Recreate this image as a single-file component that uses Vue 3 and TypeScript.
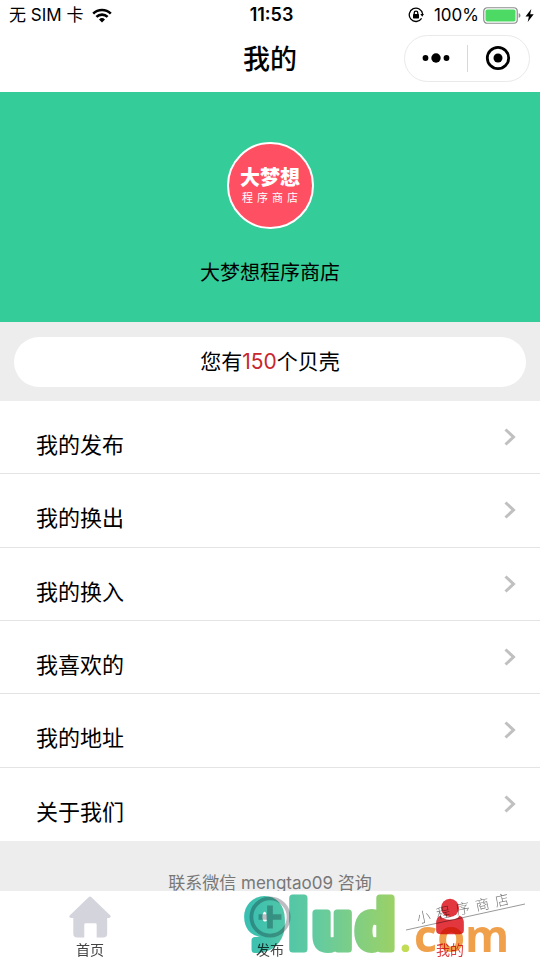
<script setup lang="ts">
interface MenuItem {
  id: string
  label: string
}

interface TabItem {
  id: 'home' | 'publish' | 'mine'
  label: string
}

const shells: number = 150

const menu: MenuItem[] = [
  { id: 'published', label: '我的发布' },
  { id: 'given', label: '我的换出' },
  { id: 'received', label: '我的换入' },
  { id: 'liked', label: '我喜欢的' },
  { id: 'address', label: '我的地址' },
  { id: 'about', label: '关于我们' },
]

const tabs: TabItem[] = [
  { id: 'home', label: '首页' },
  { id: 'publish', label: '发布' },
  { id: 'mine', label: '我的' },
]

const activeTab: TabItem['id'] = 'mine'
</script>

<template>
  <div class="screen">
    <header class="top">
      <div class="status">
        <div class="carrier">
          <span>无 SIM 卡</span>
          <svg class="wifi" viewBox="0 0 20 15" aria-hidden="true">
            <path d="M1.2 5.6a12.6 12.6 0 0 1 17.6 0" />
            <path d="M4.4 8.9a8 8 0 0 1 11.2 0" />
            <path class="solid" d="M10 14.4l-3-3a4.3 4.3 0 0 1 6 0z" />
          </svg>
        </div>
        <span class="time">11:53</span>
        <div class="power">
          <svg class="lock" viewBox="0 0 16 16" aria-hidden="true">
            <path d="M13.6 11.4A6.7 6.7 0 1 1 14.6 7" />
            <path class="solid" d="M12.3 6.9h3.7l-1.8 2.8z" />
            <rect class="solid" x="5" y="7" width="6" height="4.4" rx=".6" />
            <path d="M6.2 7.2V5.9a1.8 1.8 0 0 1 3.6 0v1.3" />
          </svg>
          <span class="percent">100%</span>
          <svg class="battery" viewBox="0 0 38 17" aria-hidden="true">
            <rect x=".75" y=".75" width="33.5" height="15.5" rx="3.5" fill="#fff" stroke="#8b8f8c" stroke-width="1.2" />
            <rect x="2.5" y="2.5" width="30" height="12" rx="1.8" fill="#4cd964" />
            <path d="M35.7 6v5q1.8-.6 1.8-2.5T35.7 6z" fill="#8b8f8c" />
          </svg>
          <svg class="bolt" viewBox="0 0 9 13" aria-hidden="true">
            <path d="M6.3 0L.5 7.4h3.4L2.7 13l6-7.7H5.2z" />
          </svg>
        </div>
      </div>
      <div class="nav">
        <h1>我的</h1>
        <div class="capsule">
          <button type="button" aria-label="更多">
            <svg viewBox="0 0 28 12" width="28" height="12">
              <circle cx="3.5" cy="6" r="2.9" />
              <circle cx="14" cy="6" r="4.7" />
              <circle cx="24.5" cy="6" r="2.9" />
            </svg>
          </button>
          <span class="rule"></span>
          <button type="button" aria-label="关闭">
            <svg viewBox="0 0 26 26" width="26" height="26">
              <circle cx="13" cy="13" r="10.7" fill="none" stroke="#000" stroke-width="2.8" />
              <circle cx="13" cy="13" r="4.5" />
            </svg>
          </button>
        </div>
      </div>
    </header>

    <section class="profile">
      <div class="avatar">
        <strong>大梦想</strong>
        <small>程序商店</small>
      </div>
      <p class="name">大梦想程序商店</p>
    </section>

    <main>
      <p class="balance">您有<em>{{ shells }}</em>个贝壳</p>
      <nav class="menu">
        <a v-for="item in menu" :key="item.id" :href="'#' + item.id">
          <span>{{ item.label }}</span>
          <svg viewBox="0 0 12 18" aria-hidden="true"><path d="M1.5 1.5L9.5 9l-8 7.5" /></svg>
        </a>
      </nav>
      <p class="contact">联系微信 mengtao09 咨询</p>
    </main>

    <footer class="tabbar">
      <a
        v-for="tab in tabs"
        :key="tab.id"
        :href="'#' + tab.id"
        :class="{ active: tab.id === activeTab }"
      >
        <svg v-if="tab.id === 'home'" viewBox="0 0 44 44" aria-hidden="true">
          <path fill="#d4d4dc" d="M20.5 1.2q1.5-1.2 3 0l19.8 19.3q1.2 2-1.3 2.5h-2v16.5q0 4-4 4h-7V30q0-1.5-1.5-1.5h-10Q16 28.5 16 30v13.5H8.5q-4 0-4-4V23H2q-2.5-.5-1.3-2.5z" />
        </svg>
        <svg v-else-if="tab.id === 'publish'" viewBox="0 0 44 44" aria-hidden="true">
          <g fill="none" stroke="#bcbcc2">
            <circle cx="22" cy="22" r="19.5" stroke-width="4" />
            <path d="M22 10v24M10 22h24" stroke-width="6" />
          </g>
        </svg>
        <svg v-else viewBox="0 0 44 44" aria-hidden="true">
          <g fill="#e2373e">
            <circle cx="22" cy="12.5" r="9.5" />
            <path d="M12 20.5q2.5 4.500 10 4.500t10-4.500q4.500 2 4.500 8V36q0 4-4 4h-21q-4 0-4-4v-7.500q0-6 4.500-8z" />
          </g>
        </svg>
        <span>{{ tab.label }}</span>
      </a>
      <svg class="watermark" viewBox="0 0 300 76" aria-hidden="true">
        <defs>
          <linearGradient id="brand" gradientUnits="userSpaceOnUse" x1="4" y1="0" x2="153" y2="0">
            <stop offset="0" stop-color="#38bfb2" />
            <stop offset=".5" stop-color="#64cb9f" />
            <stop offset="1" stop-color="#9bd167" />
          </linearGradient>
        </defs>
        <g class="brand" fill="url(#brand)" stroke="url(#brand)">
          <text x="5" y="65">9</text>
          <text x="49" y="65">l</text>
          <text x="73" y="65">u</text>
          <text x="116" y="65">d</text>
        </g>
        <text class="dot" x="159" y="68">.</text>
        <text class="domain" x="174" y="68">com</text>
        <path class="pen" d="M166 46L285 20" />
        <text class="signature" transform="rotate(-12 180 40)" x="178" y="39">小程序商店</text>
      </svg>
    </footer>
  </div>
</template>

<style>
body {
  margin: 0;
  background: #ededed;
}
</style>

<style scoped>
* {
  box-sizing: border-box;
}

.screen {
  display: flex;
  flex-direction: column;
  min-height: 100vh;
  background: #ededed;
  color: #000;
  font-family: Inter, "Noto Sans CJK SC", sans-serif;
}

h1,
p {
  margin: 0;
}

a {
  color: inherit;
  text-decoration: none;
}

.top {
  height: 92px;
  background: #fff;
}

.status {
  display: grid;
  grid-template-columns: 1fr auto 1fr;
  align-items: center;
  height: 30px;
  padding: 0 6px 0 9px;
  font-size: 17px;
  line-height: 30px;
}

.carrier,
.power {
  display: flex;
  align-items: center;
}

.carrier {
  gap: 9px;
}

.power {
  justify-content: flex-end;
}

.wifi {
  width: 20px;
  height: 15px;
  fill: none;
  stroke: #000;
  stroke-width: 2.6;
}

.solid {
  fill: #000;
  stroke: none;
}

.time {
  font-size: 18px;
  font-weight: 600;
}

.lock {
  width: 16px;
  height: 16px;
  margin-right: 10px;
  fill: none;
  stroke: #000;
  stroke-width: 1.3;
}

.battery {
  width: 38px;
  height: 17px;
  margin: 0 4px;
}

.bolt {
  width: 9px;
  height: 13px;
}

.nav {
  display: grid;
  grid-template-columns: 1fr auto 1fr;
  align-items: center;
  padding: 4px 10px 0;
}

.nav h1 {
  grid-column: 2;
  padding-top: 4px;
  font-size: 27px;
  line-height: 44px;
  font-weight: 500;
}

.capsule {
  justify-self: end;
  display: flex;
  align-items: center;
  width: 126px;
  height: 47px;
  border: 1px solid #e9e9e9;
  border-radius: 24px;
}

.capsule button {
  flex: 1;
  display: flex;
  align-items: center;
  justify-content: center;
  padding: 0;
  border: 0;
  background: none;
}

.rule {
  width: 1px;
  height: 27px;
  background: #d8d8d8;
}

.profile {
  display: flex;
  flex-direction: column;
  align-items: center;
  height: 230px;
  padding-top: 50px;
  background: #34cc98;
}

.avatar {
  display: flex;
  flex-direction: column;
  align-items: center;
  width: 87px;
  height: 87px;
  padding-top: 22px;
  border: 2px solid #fff;
  border-radius: 50%;
  background: #ff4f62;
  color: #fff;
}

.avatar strong {
  font-size: 20px;
  line-height: 24px;
  font-weight: 900;
}

.avatar small {
  font-size: 11px;
  line-height: 16px;
  letter-spacing: 4px;
  margin-right: -4px;
}

.name {
  margin-top: 29px;
  font-size: 20px;
  line-height: 30px;
}

.balance {
  margin: 15px 14px 14px;
  border-radius: 25px;
  background: #fff;
  font-size: 21px;
  line-height: 50px;
  text-align: center;
}

.balance em {
  color: #c9262d;
  font-style: normal;
}

.menu {
  display: grid;
  grid-auto-rows: 1fr;
  height: 440px;
  background: #fff;
}

.menu a {
  display: flex;
  align-items: center;
  justify-content: space-between;
  padding: 0 24px 0 36px;
  border-bottom: 1px solid #e4e4e4;
  font-size: 22px;
}

.menu a:last-child {
  border-bottom: 0;
}

.menu span {
  padding-top: 12px;
}

.menu svg {
  width: 12px;
  height: 18px;
  fill: none;
  stroke: #c0c0c0;
  stroke-width: 3;
}

.contact {
  padding: 30px 0 64px;
  color: #777;
  font-size: 17px;
  line-height: 25px;
  text-align: center;
}

.tabbar {
  position: fixed;
  right: 0;
  bottom: 0;
  left: 0;
  display: flex;
  height: 69px;
  background: #fff;
  color: #444;
}

.tabbar a {
  flex: 1;
  display: flex;
  flex-direction: column;
  align-items: center;
  padding-top: 5px;
  font-size: 14px;
  line-height: 20px;
}

.tabbar a svg {
  width: 44px;
  height: 44px;
  margin-bottom: 2px;
}

.tabbar .active {
  color: #dc3b40;
}

.watermark {
  position: absolute;
  right: 0;
  bottom: 0;
  width: 300px;
  height: 76px;
  overflow: visible;
  mix-blend-mode: multiply;
  pointer-events: none;
}

.brand {
  font-family: Roboto, sans-serif;
  font-size: 68px;
  font-weight: 900;
  stroke-width: 7;
  stroke-linejoin: round;
}

.dot,
.domain {
  font-family: "Open Sans", sans-serif;
  font-size: 45px;
  font-weight: 700;
}

.dot {
  fill: #c3dc55;
}

.domain {
  fill: #f0a04b;
}

.pen {
  fill: none;
  stroke: #999;
  stroke-width: 1;
}

.signature {
  fill: #777;
  font-size: 14px;
  font-weight: 300;
  letter-spacing: 6px;
}
</style>
